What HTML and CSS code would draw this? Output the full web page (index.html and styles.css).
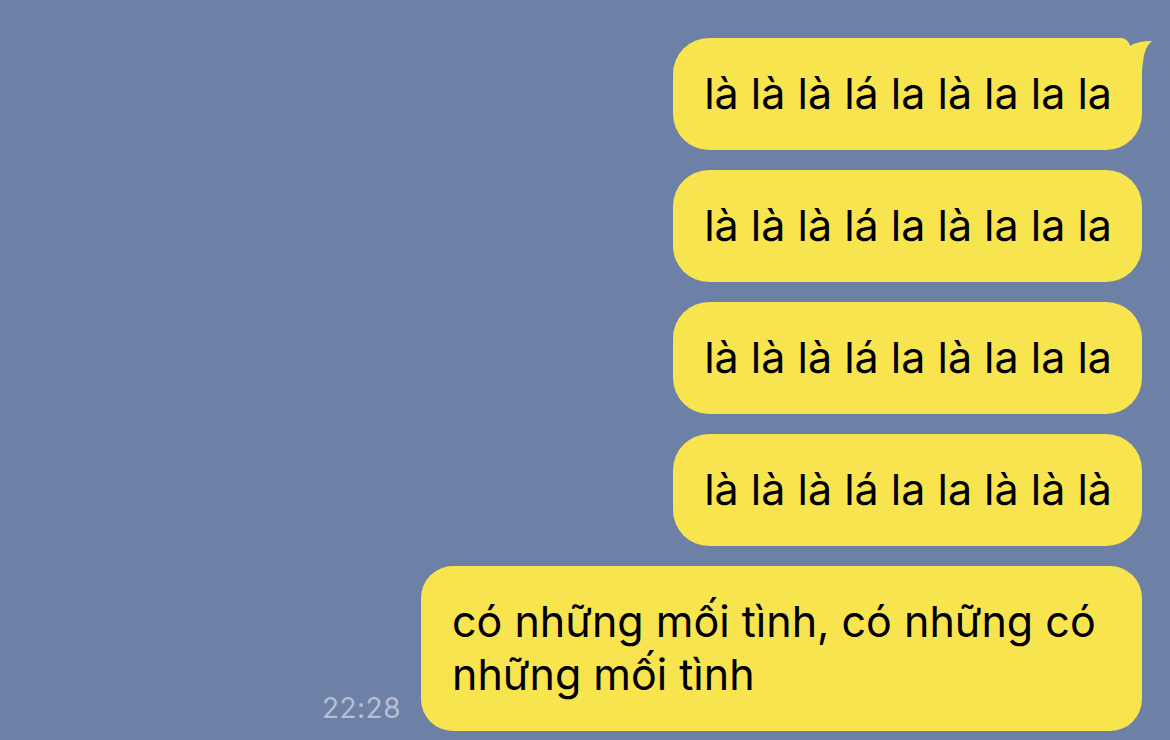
FILE: index.html
```html
<!DOCTYPE html>
<html lang="vi">

<head>
    <meta charset="UTF-8">
    <meta name="viewport" content="width=device-width, initial-scale=1.0">
    <title>Chat</title>
    <link rel="stylesheet" href="styles.css">
</head>

<body>

    <div class="chat">
        <div class="bubble first">
            là là là lá la là la la la
            <svg class="tail" width="48" height="44" viewBox="0 0 48 44">
                <path d="M0 0 H15 C20 0 23 4 24 8 C30 4 38 3 46 3 C41 7 38 14 37 24 C36 30 36 34 36 44 H0 Z" fill="#f8e44e" />
            </svg>
        </div>
        <div class="bubble">là là là lá la là la la la</div>
        <div class="bubble">là là là lá la là la la la</div>
        <div class="bubble">là là là lá la la là là là</div>

        <div class="row">
            <span class="time">22:28</span>
            <div class="bubble wide">có những mối tình, có những có những mối tình</div>
        </div>
    </div>

</body>

</html>
```

FILE: styles.css
```css
* {
    margin: 0;
    padding: 0;
    box-sizing: border-box;
}

body {
    background: #6d81a7;
    font-family: Inter, 'Noto Sans', sans-serif;
    width: 1170px;
    height: 740px;
    overflow: hidden;
}

.chat {
    display: flex;
    flex-direction: column;
    align-items: flex-end;
    gap: 20px;
    padding: 38px 28px 0 0;
}

.bubble {
    position: relative;
    background: #f8e44e;
    color: #000;
    font-size: 43px;
    line-height: 53px;
    padding: 29px 30px 30px 31px;
    border-radius: 36px;
    white-space: nowrap;
}

.tail {
    position: absolute;
    top: 0;
    right: -12px;
    display: block;
}

.row {
    display: flex;
    align-items: flex-end;
    gap: 20px;
}

.time {
    color: #b3bfd6;
    font-size: 28px;
    padding-bottom: 6px;
    letter-spacing: 0.5px;
}

.wide {
    white-space: normal;
    width: 721px;
    border-radius: 32px;
    padding: 29px 31px 30px 31px;
}
```
